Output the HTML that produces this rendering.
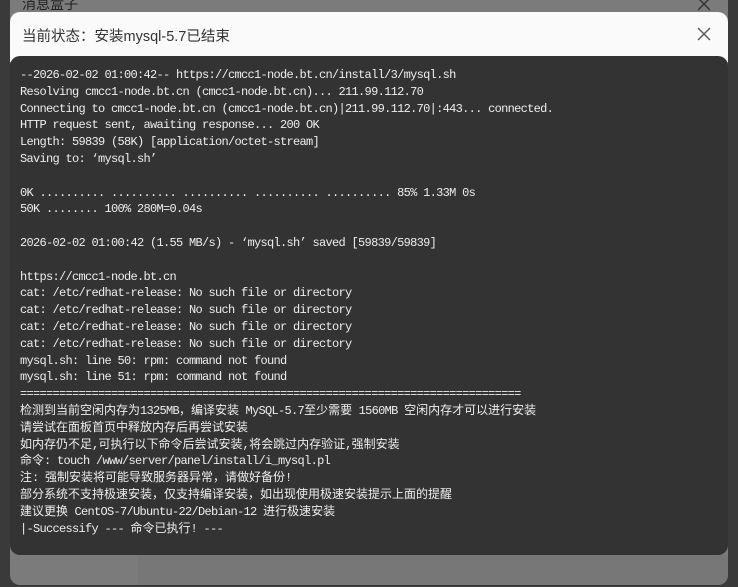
<!DOCTYPE html>
<html><head><meta charset="utf-8"><style>
html,body{margin:0;padding:0;width:738px;height:587px;overflow:hidden;background:#3a3a3a;font-family:"Liberation Sans","Noto Sans CJK SC",sans-serif;}
.back{position:absolute;left:10px;top:-10px;width:718px;height:595px;background:#7b7b7b;border-radius:0 0 10px 10px;}
.back2{position:absolute;left:138px;top:555px;width:590px;height:30px;background:#777;border-radius:0 0 10px 0;}
.bt{position:absolute;left:22px;top:-6px;font-size:14px;color:#222;}
.hdr{position:absolute;left:10px;top:12px;width:718px;height:50px;background:#fafafa;border-radius:10px 10px 0 0;}
.ttl{position:absolute;left:22px;top:25px;font-size:14.5px;color:#333;}
.x{position:absolute;width:14px;height:14px;}
.term{position:absolute;left:10px;top:56px;width:718px;height:499px;background:#333;border-radius:10px;}
pre{position:absolute;left:20px;top:67px;margin:0;font-family:"Liberation Mono","Noto Sans CJK SC",monospace;font-size:12px;letter-spacing:-0.7px;line-height:16.8px;color:#eee;}
.c{letter-spacing:0;}
</style></head><body>
<div class="back"></div><div class="back2"></div>
<div class="bt">消息盒子</div>
<svg class="x" style="left:697px;top:-3px" viewBox="0 0 14 14"><path d="M1 1L13 13M13 1L1 13" stroke="#333" stroke-width="1.4"/></svg>
<div class="hdr"></div>
<div class="ttl">当前状态：安装mysql-5.7已结束</div>
<svg class="x" style="left:697px;top:27px" viewBox="0 0 14 14"><path d="M1 1L13 13M13 1L1 13" stroke="#555" stroke-width="1.4"/></svg>
<div class="term"></div>
<pre>--2026-02-02 01:00:42-- https://cmcc1-node.bt.cn/install/3/mysql.sh
Resolving cmcc1-node.bt.cn (cmcc1-node.bt.cn)... 211.99.112.70
Connecting to cmcc1-node.bt.cn (cmcc1-node.bt.cn)|211.99.112.70|:443... connected.
HTTP request sent, awaiting response... 200 OK
Length: 59839 (58K) [application/octet-stream]
Saving to: ‘mysql.sh’

0K .......... .......... .......... .......... .......... 85% 1.33M 0s
50K ........ 100% 280M=0.04s

2026-02-02 01:00:42 (1.55 MB/s) - ‘mysql.sh’ saved [59839/59839]

https://cmcc1-node.bt.cn
cat: /etc/redhat-release: No such file or directory
cat: /etc/redhat-release: No such file or directory
cat: /etc/redhat-release: No such file or directory
cat: /etc/redhat-release: No such file or directory
mysql.sh: line 50: rpm: command not found
mysql.sh: line 51: rpm: command not found
=============================================================================
<span class="c">检测到当前空闲内存为</span>1325MB<span class="c">，编译安装</span> MySQL-5.7<span class="c">至少需要</span> 1560MB <span class="c">空闲内存才可以进行安装</span>
<span class="c">请尝试在面板首页中释放内存后再尝试安装</span>
<span class="c">如内存仍不足</span>,<span class="c">可执行以下命令后尝试安装</span>,<span class="c">将会跳过内存验证</span>,<span class="c">强制安装</span>
<span class="c">命令</span>: touch /www/server/panel/install/i_mysql.pl
<span class="c">注</span>: <span class="c">强制安装将可能导致服务器异常，请做好备份</span>!
<span class="c">部分系统不支持极速安装，仅支持编译安装，如出现使用极速安装提示上面的提醒</span>
<span class="c">建议更换</span> CentOS-7/Ubuntu-22/Debian-12 <span class="c">进行极速安装</span>
|-Successify --- <span class="c">命令已执行</span>! ---</pre>
</body></html>
